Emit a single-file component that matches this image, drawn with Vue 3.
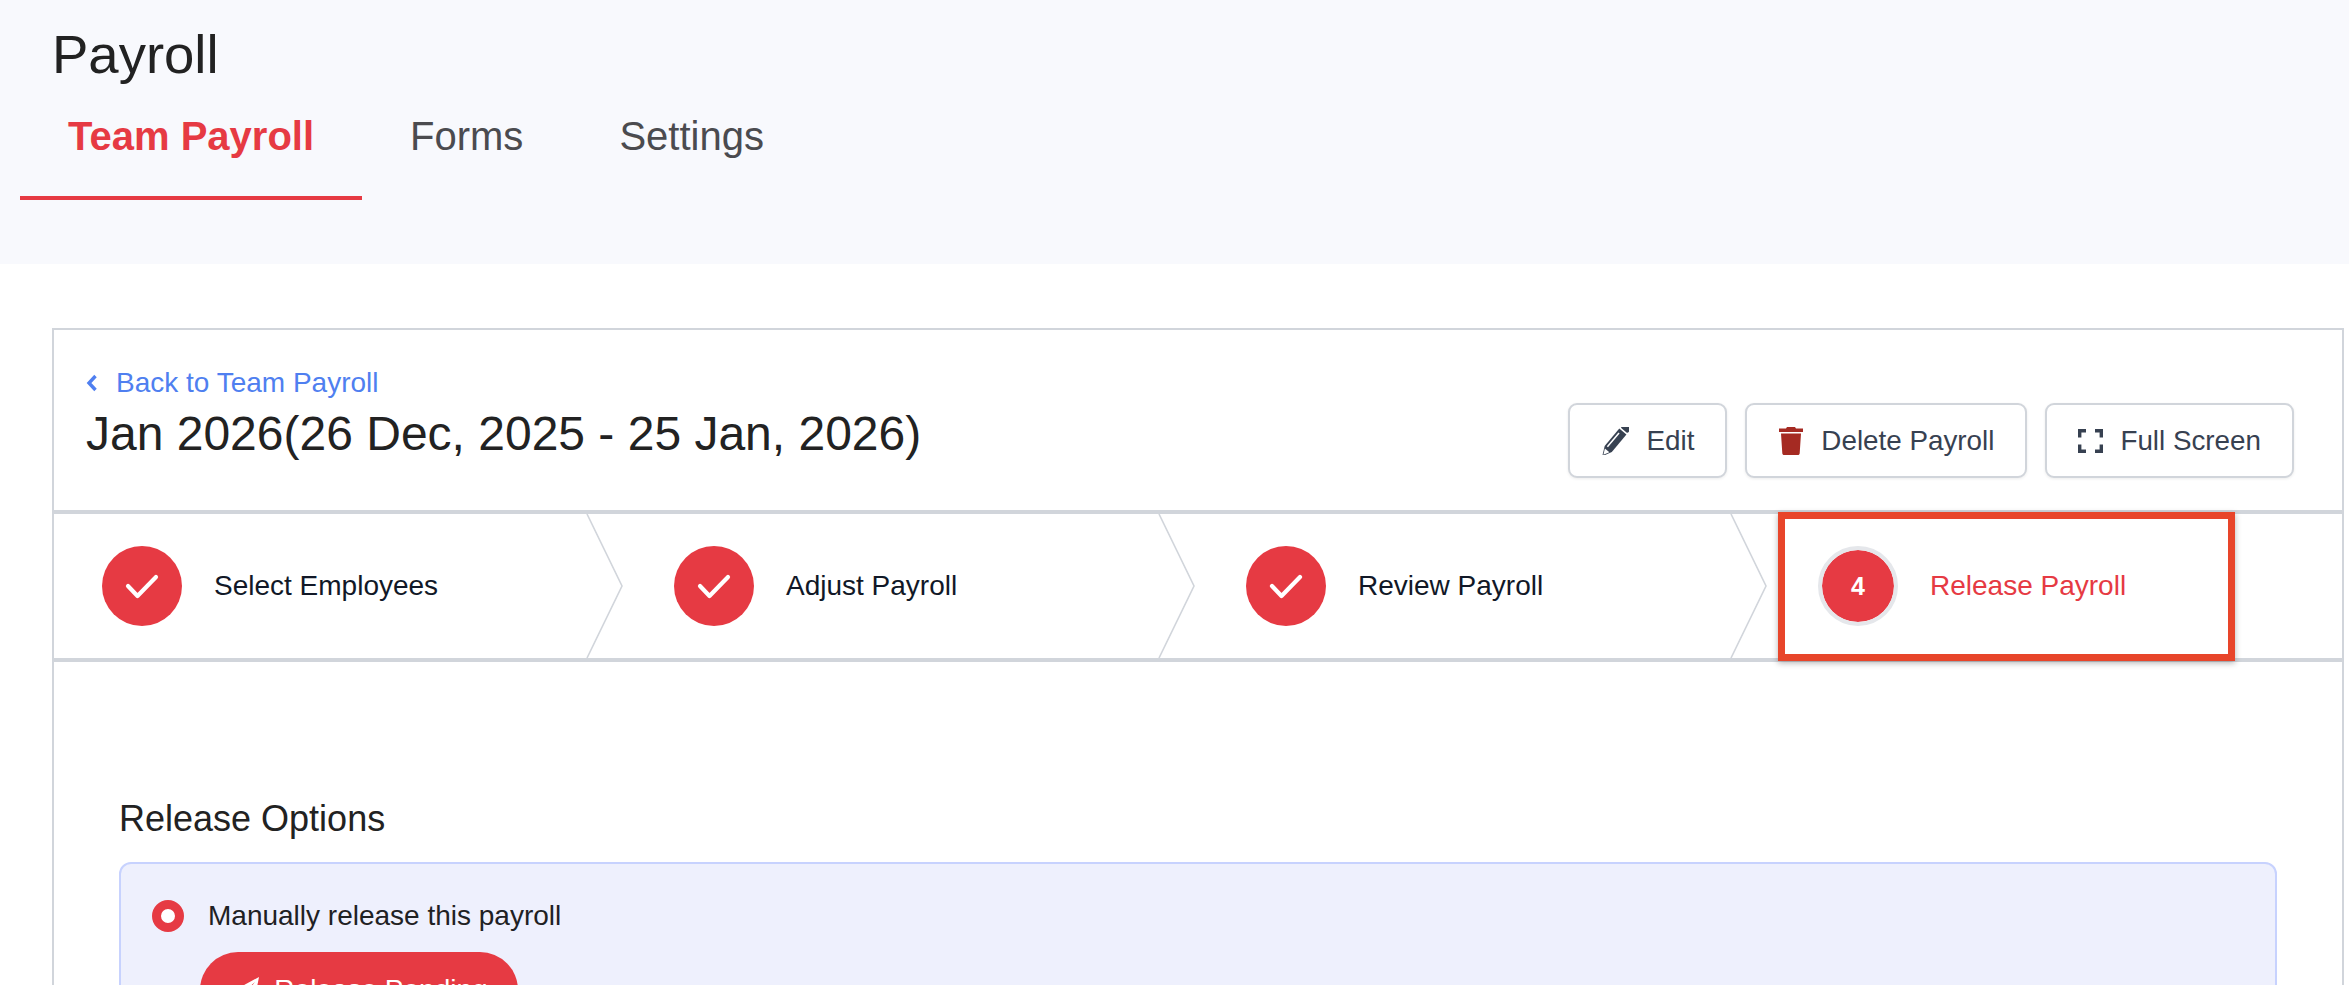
<template>
  <div class="page">
    <header class="top">
      <h1 class="top-title">Payroll</h1>
      <nav class="tabs">
        <a
          v-for="tab in tabs"
          :key="tab"
          class="tab"
          :class="{ active: tab === 'Team Payroll' }"
        >{{ tab }}</a>
      </nav>
    </header>

    <main class="content">
      <section class="card">
        <div class="card-head">
          <div class="head-left">
            <a class="back">
              <svg viewBox="0 0 12 18" width="12" height="18">
                <path d="M9.5 2 3 9l6.5 7" fill="none" stroke="currentColor" stroke-width="3.4" />
              </svg>
              <span>Back to Team Payroll</span>
            </a>
            <h2 class="run-title">Jan 2026(26 Dec, 2025 - 25 Jan, 2026)</h2>
          </div>
          <div class="actions">
            <button class="btn">
              <svg viewBox="2 2 24 24" width="28" height="28">
                <g transform="rotate(40 14 14)" fill="#374151">
                  <rect x="10" y="-3" width="8" height="5" rx="1.5" />
                  <path d="M10 3.500h8V23l-4 8-4-8V3.500Z" />
                  <path d="M12.200 6.500v15.500" stroke="#fff" stroke-width="1.300" />
                  <path d="M11.500 24.500h5L14 29.500l-2.500-5Z" fill="#fff" />
                </g>
              </svg>
              <span>Edit</span>
            </button>
            <button class="btn">
              <svg viewBox="0 0 26 28" width="26" height="28">
                <path fill="#a52a22" d="M9 0h8l1 1.600h7V5H1V1.600h7L9 0ZM3 6.600h20l-1.300 19.600c-.1 1.100-.8 1.800-1.800 1.800H6.100c-1 0-1.700-.7-1.800-1.800L3 6.600Z" />
              </svg>
              <span>Delete Payroll</span>
            </button>
            <button class="btn">
              <svg viewBox="0 0 25 24" width="25" height="24">
                <path fill="none" stroke="#374151" stroke-width="3.400" d="M1.700 8.500V1.700H8M17 1.700h6.300V8.500M23.300 15.500v6.800H17M8 22.300H1.700v-6.800" />
              </svg>
              <span>Full Screen</span>
            </button>
          </div>
        </div>

        <div class="steps">
          <div v-for="(step, i) in steps" :key="step.label" class="step" :class="{ current: !step.done }">
            <span class="step-circle">
              <svg v-if="step.done" viewBox="0 0 40 30" width="40" height="30">
                <path d="M6 15 15.500 25 34 6" fill="none" stroke="#fff" stroke-width="4.200" stroke-linecap="round" stroke-linejoin="round" />
              </svg>
              <template v-else>{{ i + 1 }}</template>
            </span>
            <span class="step-label">{{ step.label }}</span>
            <svg v-if="i < steps.length - 1" class="chevron" viewBox="0 0 38 144" width="38" height="144" preserveAspectRatio="none">
              <path d="M1 0 36 72 1 144" fill="none" stroke="#d1d5db" stroke-width="1.600" />
            </svg>
          </div>
          <div class="callout"></div>
        </div>

        <div class="release">
          <h3 class="release-title">Release Options</h3>
          <div class="panel">
            <label class="option">
              <span class="radio"></span>
              <span>Manually release this payroll</span>
            </label>
            <button class="release-btn">
              <svg viewBox="0 0 28 28" width="28" height="28">
                <path fill="#fff" d="M27 1 1 15l8 3.500L23 6 12 20v7l4.500-5.500 6 2.500L27 1Z" />
              </svg>
              <span>Release Pending</span>
            </button>
          </div>
        </div>
      </section>
    </main>
  </div>
</template>

<script setup>
const tabs = ['Team Payroll', 'Forms', 'Settings']

const steps = [
  { label: 'Select Employees', done: true },
  { label: 'Adjust Payroll', done: true },
  { label: 'Review Payroll', done: true },
  { label: 'Release Payroll', done: false }
]
</script>

<style>
html,
body {
  margin: 0;
  background: #fff;
  overflow: hidden;
}
</style>

<style scoped>
.page {
  width: 2349px;
  height: 985px;
  overflow: hidden;
  font-family: "Liberation Sans", Arial, sans-serif;
  color: #1f2124;
}

/* 顶部 */
.top {
  height: 264px;
  box-sizing: border-box;
  padding: 24px 0 0 20px;
  background: #f8f9fd;
}

.top-title {
  margin: 0 0 0 32px;
  font-size: 54.5px;
  line-height: 62px;
  font-weight: 400;
  color: #222;
}

.tabs {
  display: flex;
}

.tab {
  box-sizing: border-box;
  height: 114px;
  padding: 27px 48px 0;
  font-size: 40px;
  line-height: 46px;
  color: #4b4b4f;
}

.tab.active {
  border-bottom: 4px solid #e63a43;
  font-weight: 700;
  color: #e63a43;
}

/* 内容卡片 */
.content {
  padding: 64px 0 0 52px;
}

.card {
  box-sizing: border-box;
  width: 2292px;
  min-height: 700px;
  border: solid #d1d5db;
  border-width: 2px 2px 0;
}

.card-head {
  display: flex;
  justify-content: space-between;
  align-items: flex-end;
  box-sizing: border-box;
  height: 180px;
  padding: 0 48px 32px 32px;
}

.head-left {
  align-self: flex-start;
  padding-top: 37px;
}

.back {
  display: flex;
  align-items: center;
  gap: 18px;
  font-size: 28px;
  line-height: 32px;
  color: #4f7ff0;
}

.run-title {
  margin: 7px 0 0;
  font-size: 48px;
  line-height: 56px;
  font-weight: 400;
  color: #222;
}

.actions {
  display: flex;
  gap: 18px;
}

.btn {
  display: flex;
  align-items: center;
  gap: 17px;
  box-sizing: border-box;
  height: 75px;
  padding: 0 31px;
  background: #fff;
  border: 2px solid #d1d5db;
  border-radius: 9px;
  box-shadow: 0 1px 3px rgba(0, 0, 0, 0.08);
  font-family: inherit;
  font-size: 27.8px;
  color: #374151;
}

/* 步骤条 */
.steps {
  position: relative;
  display: flex;
  height: 152px;
  box-sizing: border-box;
  border-top: 4px solid #d1d5db;
  border-bottom: 4px solid #d1d5db;
}

.step {
  position: relative;
  display: flex;
  align-items: center;
  gap: 32px;
  box-sizing: border-box;
  flex: 0 0 572px;
  padding-left: 48px;
  font-size: 28px;
  color: #111827;
}

.step-circle {
  display: flex;
  align-items: center;
  justify-content: center;
  width: 80px;
  height: 80px;
  border-radius: 50%;
  background: #e63a43;
  color: #fff;
  font-size: 25px;
  font-weight: 700;
}

.step.current .step-circle {
  box-sizing: border-box;
  border: 4px solid #e5e7eb;
  background-clip: padding-box;
}

.step.current .step-label {
  color: #e63a43;
}

.chevron {
  position: absolute;
  top: 0;
  right: 2px;
}

.callout {
  position: absolute;
  top: -2px;
  left: 1724px;
  width: 457px;
  height: 149px;
  box-sizing: border-box;
  border: 7px solid #e8452a;
  box-shadow: 0 2px 6px rgba(0, 0, 0, 0.3);
}

/* 发放选项 */
.release {
  padding: 135px 0 0 65px;
}

.release-title {
  margin: 0;
  font-size: 36px;
  line-height: 44px;
  font-weight: 400;
  color: #222;
}

.panel {
  box-sizing: border-box;
  width: 2158px;
  height: 300px;
  margin-top: 21px;
  padding: 36px 0 0 31px;
  background: #eef0fd;
  border: 2px solid #c7d2fe;
  border-radius: 12px;
}

.option {
  display: flex;
  align-items: center;
  gap: 24px;
  font-size: 28px;
  line-height: 32px;
  color: #1f2124;
}

.radio {
  box-sizing: border-box;
  width: 32px;
  height: 32px;
  border-radius: 50%;
  background: #fff;
  border: 9.500px solid #e63a43;
}

.release-btn {
  display: flex;
  align-items: center;
  justify-content: center;
  gap: 14px;
  box-sizing: border-box;
  margin: 20px 0 0 48px;
  padding-right: 4px;
  width: 318px;
  height: 76px;
  border: none;
  border-radius: 38px;
  background: #e63a43;
  color: #fff;
  font-family: inherit;
  font-size: 28px;
  white-space: nowrap;
}
</style>
